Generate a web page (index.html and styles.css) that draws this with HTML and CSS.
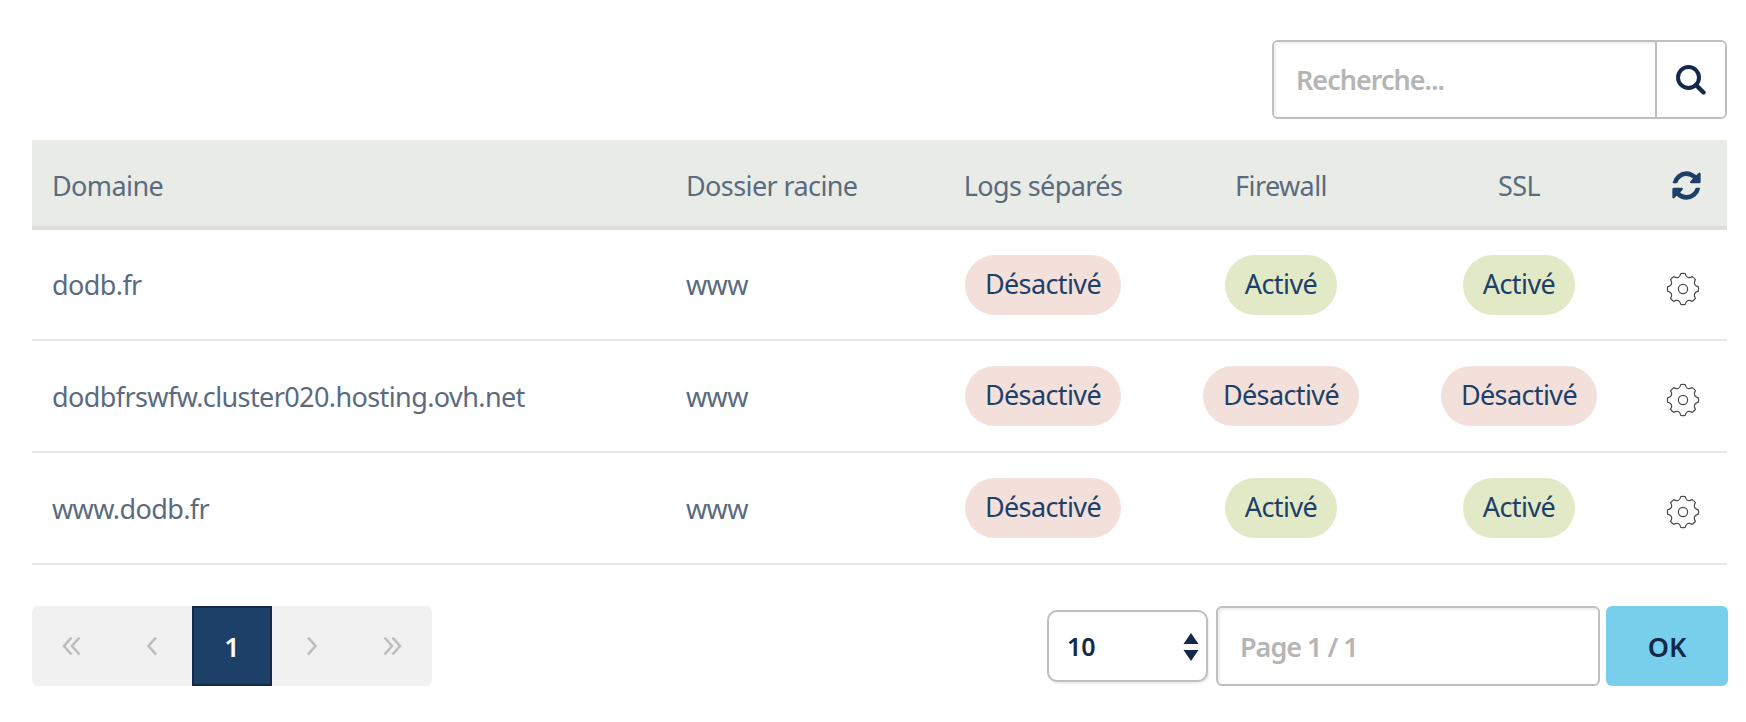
FILE: index.html
```html
<!DOCTYPE html>
<html lang="fr">
<head>
    <meta charset="UTF-8">
    <title>Multisite</title>
    <link rel="stylesheet" href="styles.css">
</head>
<body>
    <svg class="defs" width="0" height="0">
        <symbol id="gear" viewBox="0 0 34 34">
            <path d="M14.84 1.65 Q17 1.2 19.16 1.65 Q20.83 7.76 26.33 4.62 Q28 5.9 29.38 7.67 Q26.24 13.17 32.35 14.84 Q32.8 17 32.35 19.16 Q26.24 20.83 29.38 26.33 Q28 28.1 26.33 29.38 Q20.83 26.24 19.16 32.35 Q17 32.8 14.84 32.35 Q13.17 26.24 7.67 29.38 Q5.9 28 4.62 26.33 Q7.76 20.83 1.65 19.16 Q1.2 17 1.65 14.84 Q7.76 13.17 4.62 7.67 Q5.9 6 7.67 4.62 Q13.17 7.76 14.84 1.65 Z" fill="none" stroke="#4a4a4a" stroke-width="1.2"/>
            <circle cx="17" cy="17" r="4.6" fill="none" stroke="#4a4a4a" stroke-width="1.2"/>
        </symbol>
    </svg>

    <div class="page">
        <div class="toolbar">
            <div class="search">
                <input type="text" class="search-input" placeholder="Recherche...">
                <button class="search-btn" aria-label="Rechercher">
                    <svg width="30" height="30" viewBox="0 0 30 30"><circle cx="12.5" cy="12.5" r="10.5" fill="none" stroke="#14294a" stroke-width="4"/><path d="M20 20 L27.5 27.5" stroke="#14294a" stroke-width="4.4" stroke-linecap="round"/></svg>
                </button>
            </div>
        </div>

        <table class="grid">
            <colgroup>
                <col class="col-domain"><col class="col-root"><col class="col-logs"><col class="col-firewall"><col class="col-ssl"><col class="col-action">
            </colgroup>
            <thead>
                <tr>
                    <th>Domaine</th>
                    <th>Dossier racine</th>
                    <th class="center">Logs séparés</th>
                    <th class="center">Firewall</th>
                    <th class="center">SSL</th>
                    <th class="center">
                        <svg class="refresh" width="33" height="33" viewBox="0 0 1792 1792"><path fill="#1d4068" d="M1639 1056q0 5-1 7-64 268-268 434.5t-478 166.5q-146 0-282.5-55t-243.5-157l-129 129q-19 19-45 19t-45-19-19-45v-448q0-26 19-45t45-19h448q26 0 45 19t19 45-19 45l-137 137q71 66 161 102t187 36q134 0 250-65t186-179q11-17 53-117 8-23 30-23h192q13 0 22.5 9.5t9.5 22.5zm25-800v448q0 26-19 45t-45 19h-448q-26 0-45-19t-19-45 19-45l138-138q-148-137-349-137-134 0-250 65t-186 179q-11 17-53 117-8 23-30 23h-199q-13 0-22.5-9.5t-9.5-22.5v-7q65-268 270-434.5t480-166.5q146 0 284 55.5t245 156.5l130-129q19-19 45-19t45 19 19 45z"/></svg>
                    </th>
                </tr>
            </thead>
            <tbody>
                <tr>
                    <td>dodb.fr</td>
                    <td>www</td>
                    <td class="center"><span class="pill pill-off">Désactivé</span></td>
                    <td class="center"><span class="pill pill-on">Activé</span></td>
                    <td class="center"><span class="pill pill-on">Activé</span></td>
                    <td class="center"><svg class="gear" width="34" height="34"><use href="#gear"/></svg></td>
                </tr>
                <tr>
                    <td>dodbfrswfw.cluster020.hosting.ovh.net</td>
                    <td>www</td>
                    <td class="center"><span class="pill pill-off">Désactivé</span></td>
                    <td class="center"><span class="pill pill-off">Désactivé</span></td>
                    <td class="center"><span class="pill pill-off">Désactivé</span></td>
                    <td class="center"><svg class="gear" width="34" height="34"><use href="#gear"/></svg></td>
                </tr>
                <tr>
                    <td>www.dodb.fr</td>
                    <td>www</td>
                    <td class="center"><span class="pill pill-off">Désactivé</span></td>
                    <td class="center"><span class="pill pill-on">Activé</span></td>
                    <td class="center"><span class="pill pill-on">Activé</span></td>
                    <td class="center"><svg class="gear" width="34" height="34"><use href="#gear"/></svg></td>
                </tr>
            </tbody>
        </table>

        <div class="footer">
            <div class="pager">
                <a class="pager-item"><svg width="20" height="20" viewBox="0 0 20 20"><path d="M9.5 1.5 L2 10 L9.5 18.5 M17.5 1.5 L10 10 L17.5 18.5" fill="none" stroke="#bdbdbd" stroke-width="2.6"/></svg></a>
                <a class="pager-item"><svg width="14" height="20" viewBox="0 0 14 20"><path d="M11 1.5 L3.5 10 L11 18.5" fill="none" stroke="#bdbdbd" stroke-width="2.6"/></svg></a>
                <a class="pager-item active">1</a>
                <a class="pager-item"><svg width="14" height="20" viewBox="0 0 14 20"><path d="M3 1.5 L10.5 10 L3 18.5" fill="none" stroke="#bdbdbd" stroke-width="2.6"/></svg></a>
                <a class="pager-item"><svg width="20" height="20" viewBox="0 0 20 20"><path d="M2.5 1.5 L10 10 L2.5 18.5 M10.5 1.5 L18 10 L10.5 18.5" fill="none" stroke="#bdbdbd" stroke-width="2.6"/></svg></a>
            </div>
            <div class="page-controls">
                <div class="select-wrap">
                    <select class="page-size"><option>10</option><option>25</option><option>50</option></select>
                    <svg class="select-arrows" width="16" height="28" viewBox="0 0 16 28"><path d="M8 0 L15.5 11 L0.5 11 Z M0.5 17 L15.5 17 L8 28 Z" fill="#14294a"/></svg>
                </div>
                <input type="text" class="page-input" placeholder="Page 1 / 1">
                <button class="ok-btn">OK</button>
            </div>
        </div>
    </div>
</body>
</html>
```

FILE: styles.css
```css
:root {
    --text: #5a6b80; --navy: #14294a; --blue: #1d4068; --line: #bfbfbf; --muted: #b5b5b5;
}
* { box-sizing: border-box; }
body { margin: 0; background: #fff; font-family: 'Noto Sans', sans-serif; font-size: 27px; color: var(--text); }
.defs { position: absolute; }
.page { width: 1728px; padding: 40px 0 0 32px; }

.toolbar { display: flex; justify-content: flex-end; margin-bottom: 21px; padding-right: 1px; }
.search { display: flex; width: 455px; height: 79px; border: 2px solid var(--line); border-radius: 6px; overflow: hidden; }
.search-input { flex: 1; min-width: 0; border: none; outline: none; padding: 0 22px; font: 600 27px 'Noto Sans', sans-serif; letter-spacing: -1px; box-shadow: inset 2px 2px 3px rgba(0,0,0,.07); }
.search-input::placeholder, .page-input::placeholder { color: var(--muted); opacity: 1; }
.search-btn { width: 70px; border: none; border-left: 2px solid var(--line); background: #fff; padding: 0; display: flex; align-items: center; justify-content: center; }

.grid { width: 1695px; table-layout: fixed; border-collapse: collapse; }
.col-domain { width: 634px; } .col-root { width: 251px; } .col-logs { width: 252px; }
.col-firewall { width: 224px; } .col-ssl { width: 252px; } .col-action { width: 82px; }
.grid th { height: 88px; background: #e9ebe6; border-bottom: 4px solid #dcdedb; font-weight: 400; text-align: left; padding: 4px 0 0 20px; letter-spacing: -.6px; }
.grid td { height: 112px; border-bottom: 2px solid #e8e9e6; padding: 0 0 0 20px; letter-spacing: -.6px; }
.grid .center { text-align: center; padding-left: 0; }
.refresh { display: block; margin: 0 auto; }
.gear { display: block; margin: 8px auto 0 auto; position: relative; left: -3px; }

.pill { display: inline-block; height: 60px; line-height: 58px; padding: 0 20px; border-radius: 30px; color: var(--blue); }
.pill-off { background: #f3e0db; }
.pill-on { background: #e2e9c7; }

.footer { display: flex; justify-content: space-between; align-items: center; margin-top: 41px; }
.pager { display: flex; width: 400px; height: 80px; background: #f1f1f1; border-radius: 6px; overflow: hidden; }
.pager-item { width: 80px; display: flex; align-items: center; justify-content: center; }
.pager-item.active { background: var(--blue); border: 2px solid var(--navy); color: #fff; font-weight: 600; }
.page-controls { display: flex; align-items: center; gap: 8px; }
.select-wrap { position: relative; }
.page-size { display: block; appearance: none; width: 161px; height: 72px; padding: 0 18px; background: #fff; border: 2px solid var(--line); border-radius: 10px; font: 600 25px 'Noto Sans', sans-serif; color: var(--navy); box-shadow: 1px 2px 2px rgba(0,0,0,.08); }
.select-arrows { position: absolute; right: 9px; top: 23px; }
.page-input { width: 384px; height: 80px; padding: 0 22px; border: 2px solid var(--line); border-radius: 6px; outline: none; font: 600 27px 'Noto Sans', sans-serif; letter-spacing: -1px; box-shadow: inset 2px 2px 3px rgba(0,0,0,.07); }
.ok-btn { width: 122px; height: 80px; margin-left: -2px; border: none; border-radius: 6px; background: #78cfec; color: var(--navy); font: 600 27px 'Noto Sans', sans-serif; }
```
